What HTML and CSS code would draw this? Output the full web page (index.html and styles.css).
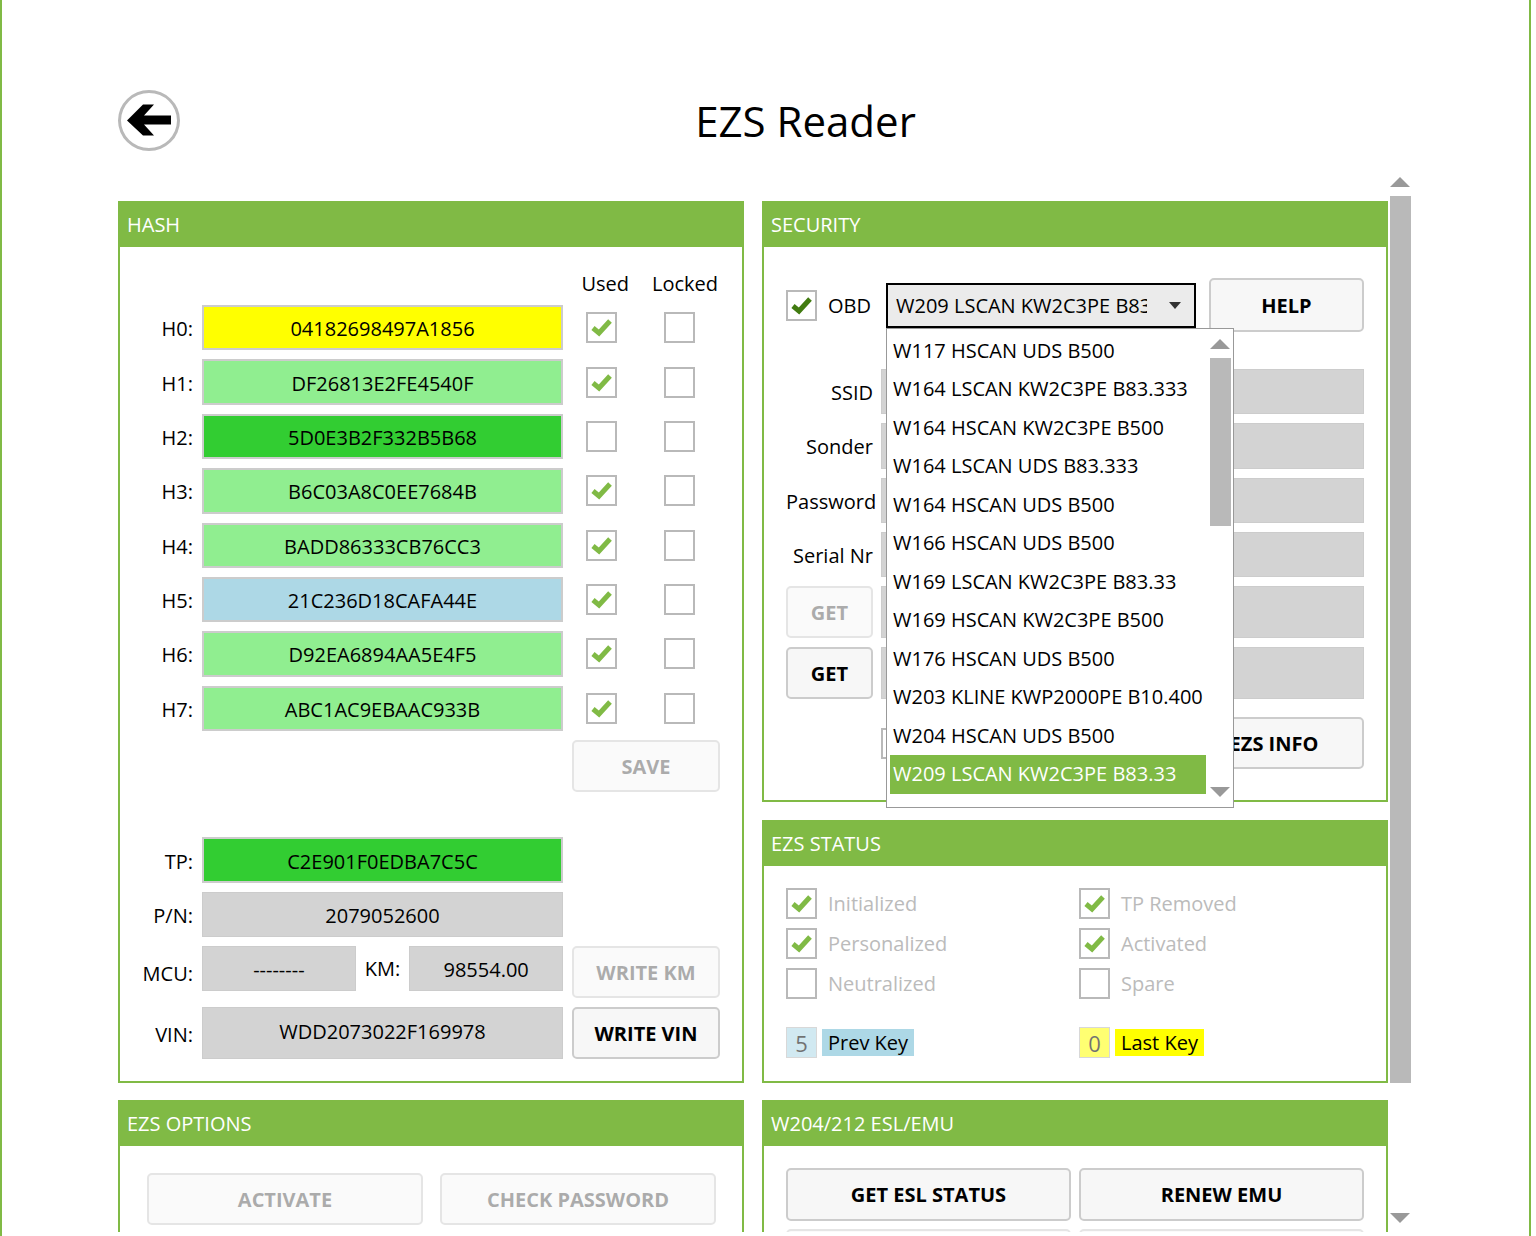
FILE: index.html
```html
<!DOCTYPE html>
<html lang="en">
    <head>
        <meta charset="utf-8">
        <title>EZS Reader</title>
        <meta name="viewport" content="width=device-width, initial-scale=1">
        <link rel="stylesheet" href="styles.css">
    </head>
    <body>
        <header class="top">
            <button class="back" type="button" aria-label="Back">
                <svg viewBox="0 0 61 61"><path d="M9 30.500 25 14.500H36L26 25.500H53V34.500H26L36 45.500H25Z"/></svg>
            </button>
            <h1>EZS Reader</h1>
        </header>
        <div class="scroller">
            <main>
                <section class="panel">
                    <h2>HASH</h2>
                    <div class="hash">
                        <div class="hash-head"><span>Used</span><span>Locked</span></div>
                        <div class="hash-rows">
                            <div class="row">
                                <label for="h0">H0:</label>
                                <input id="h0" class="field last" type="text" value="04182698497A1856">
                                <div class="flags"><input type="checkbox" aria-label="H0 used" checked><input type="checkbox" aria-label="H0 locked"></div>
                            </div>
                            <div class="row">
                                <label for="h1">H1:</label>
                                <input id="h1" class="field used" type="text" value="DF26813E2FE4540F">
                                <div class="flags"><input type="checkbox" aria-label="H1 used" checked><input type="checkbox" aria-label="H1 locked"></div>
                            </div>
                            <div class="row">
                                <label for="h2">H2:</label>
                                <input id="h2" class="field free" type="text" value="5D0E3B2F332B5B68">
                                <div class="flags"><input type="checkbox" aria-label="H2 used"><input type="checkbox" aria-label="H2 locked"></div>
                            </div>
                            <div class="row">
                                <label for="h3">H3:</label>
                                <input id="h3" class="field used" type="text" value="B6C03A8C0EE7684B">
                                <div class="flags"><input type="checkbox" aria-label="H3 used" checked><input type="checkbox" aria-label="H3 locked"></div>
                            </div>
                            <div class="row">
                                <label for="h4">H4:</label>
                                <input id="h4" class="field used" type="text" value="BADD86333CB76CC3">
                                <div class="flags"><input type="checkbox" aria-label="H4 used" checked><input type="checkbox" aria-label="H4 locked"></div>
                            </div>
                            <div class="row">
                                <label for="h5">H5:</label>
                                <input id="h5" class="field prev" type="text" value="21C236D18CAFA44E">
                                <div class="flags"><input type="checkbox" aria-label="H5 used" checked><input type="checkbox" aria-label="H5 locked"></div>
                            </div>
                            <div class="row">
                                <label for="h6">H6:</label>
                                <input id="h6" class="field used" type="text" value="D92EA6894AA5E4F5">
                                <div class="flags"><input type="checkbox" aria-label="H6 used" checked><input type="checkbox" aria-label="H6 locked"></div>
                            </div>
                            <div class="row">
                                <label for="h7">H7:</label>
                                <input id="h7" class="field used" type="text" value="ABC1AC9EBAAC933B">
                                <div class="flags"><input type="checkbox" aria-label="H7 used" checked><input type="checkbox" aria-label="H7 locked"></div>
                            </div>
                        </div>
                        <button class="btn save" type="button" disabled>SAVE</button>
                        <div class="info-rows">
                            <div class="row">
                                <label for="tp">TP:</label>
                                <input id="tp" class="field free" type="text" value="C2E901F0EDBA7C5C">
                            </div>
                            <div class="row">
                                <label for="pn">P/N:</label>
                                <input id="pn" class="field" type="text" value="2079052600">
                            </div>
                            <div class="row">
                                <label for="mcu">MCU:</label>
                                <div class="pair">
                                    <input id="mcu" class="field" type="text" value="--------">
                                    <label for="km">KM:</label>
                                    <input id="km" class="field" type="text" value="98554.00">
                                </div>
                                <button class="btn" type="button" disabled>WRITE KM</button>
                            </div>
                            <div class="row">
                                <label for="vin">VIN:</label>
                                <input id="vin" class="field tall" type="text" value="WDD2073022F169978">
                                <button class="btn" type="button">WRITE VIN</button>
                            </div>
                        </div>
                    </div>
                </section>
                <div class="column">
                    <section class="panel security">
                        <h2>SECURITY</h2>
                        <div class="security-body">
                            <div class="obd">
                                <label class="check"><input class="hot" type="checkbox" checked>OBD</label>
                                <div class="combo">
                                    <select aria-label="Vehicle protocol">
                                        <option>W209 LSCAN KW2C3PE B83.33</option>
                                    </select>
                                    <svg class="caret" viewBox="0 0 12 7"><path d="M0 0H12L6 7Z"/></svg>
                                    <div class="popup">
                                        <ul role="listbox" aria-label="Protocols">
                                            <li role="option">W117 HSCAN UDS B500</li>
                                            <li role="option">W164 LSCAN KW2C3PE B83.333</li>
                                            <li role="option">W164 HSCAN KW2C3PE B500</li>
                                            <li role="option">W164 LSCAN UDS B83.333</li>
                                            <li role="option">W164 HSCAN UDS B500</li>
                                            <li role="option">W166 HSCAN UDS B500</li>
                                            <li role="option">W169 LSCAN KW2C3PE B83.33</li>
                                            <li role="option">W169 HSCAN KW2C3PE B500</li>
                                            <li role="option">W176 HSCAN UDS B500</li>
                                            <li role="option">W203 KLINE KWP2000PE B10.400</li>
                                            <li role="option">W204 HSCAN UDS B500</li>
                                            <li role="option" class="selected" aria-selected="true">W209 LSCAN KW2C3PE B83.33</li>
                                        </ul>
                                        <div class="bar">
                                            <svg viewBox="0 0 20 10"><path d="M0 10H20L10 0Z"/></svg>
                                            <div class="track"><div class="thumb"></div></div>
                                            <svg viewBox="0 0 20 10"><path d="M0 0H20L10 10Z"/></svg>
                                        </div>
                                    </div>
                                </div>
                                <button class="btn" type="button">HELP</button>
                            </div>
                            <div class="ids">
                                <div class="id-row"><label for="ssid">SSID</label><input id="ssid" class="field" type="text"></div>
                                <div class="id-row"><label for="sonder">Sonder</label><input id="sonder" class="field" type="text"></div>
                                <div class="id-row"><label for="password">Password</label><input id="password" class="field" type="text"></div>
                                <div class="id-row"><label for="serial">Serial Nr</label><input id="serial" class="field" type="text"></div>
                            </div>
                            <div class="id-row get"><button class="btn" type="button" disabled>GET</button><input class="field tall" type="text" aria-label="First value"></div>
                            <div class="id-row get"><button class="btn" type="button">GET</button><input class="field tall" type="text" aria-label="Second value"></div>
                            <div class="read">
                                <input type="checkbox" aria-label="Read option">
                                <button class="btn" type="button">EZS INFO</button>
                            </div>
                        </div>
                    </section>
                    <section class="panel">
                        <h2>EZS STATUS</h2>
                        <div class="status">
                            <label class="check"><input type="checkbox" disabled checked>Initialized</label>
                            <label class="check"><input type="checkbox" disabled checked>TP Removed</label>
                            <label class="check"><input type="checkbox" disabled checked>Personalized</label>
                            <label class="check"><input type="checkbox" disabled checked>Activated</label>
                            <label class="check"><input type="checkbox" disabled>Neutralized</label>
                            <label class="check"><input type="checkbox" disabled>Spare</label>
                        </div>
                        <div class="keys">
                            <div class="key"><input id="prev-key" class="prev" type="text" value="5" disabled><label for="prev-key" class="prev">Prev Key</label></div>
                            <div class="key"><input id="last-key" class="last" type="text" value="0" disabled><label for="last-key" class="last">Last Key</label></div>
                        </div>
                    </section>
                </div>
                <section class="panel">
                    <h2>EZS OPTIONS</h2>
                    <div class="options">
                        <button class="btn" type="button" disabled>ACTIVATE</button>
                        <button class="btn" type="button" disabled>CHECK PASSWORD</button>
                    </div>
                </section>
                <section class="panel">
                    <h2>W204/212 ESL/EMU</h2>
                    <div class="esl">
                        <button class="btn" type="button">GET ESL STATUS</button>
                        <button class="btn" type="button">RENEW EMU</button>
                        <button class="btn" type="button" disabled></button>
                        <button class="btn" type="button" disabled></button>
                    </div>
                </section>
            </main>
            <div class="bar">
                <svg viewBox="0 0 20 10"><path d="M0 10H20L10 0Z"/></svg>
                <div class="track"><div class="thumb"></div></div>
                <svg viewBox="0 0 20 10"><path d="M0 0H20L10 10Z"/></svg>
            </div>
        </div>
    </body>
</html>
```
FILE: styles.css
```css
:root {
    --accent: #80ba45;
    --gray: #b9b9b9;
    --border: #ccc;
    --field: #d3d3d3;
    --key-last: #ff0;
    --key-prev: #add8e6;
    --key-used: #90ee90;
    --key-free: #32cd32;
    --gap: 9px;
}
* { padding: 0; margin: 0; box-sizing: border-box; }
html { background-color: white; }
body {
    display: flex; flex-flow: column;
    height: 100vh;
    margin-right: 5px;
    padding: 90px 118px 4px 116px;
    border-left: solid 2px var(--accent); border-right: solid 2px var(--accent);
    overflow: hidden;
}
body, input, button, select { font-family: "Open Sans", "Noto Sans", sans-serif; font-size: 20px; line-height: 27px; color: black; }
svg { display: block; }

/* header */
.top { display: flex; align-items: center; gap: 20px; margin-bottom: 21px; }
.top h1 { flex: auto; text-align: center; font-size: 42px; line-height: 61px; font-weight: normal; }
.back { width: 62px; height: 61px; border: solid 3px var(--gray); border-radius: 50%; background-color: white; }
.back svg { width: 61px; height: 61px; margin: -3px; }

/* scrolling area */
.scroller { flex: auto; display: flex; gap: 2px; min-height: 0; overflow: hidden; }
main {
    flex: auto;
    display: grid; grid-template-columns: 1fr 1fr; align-content: start; gap: 17px 18px;
    padding-top: 29px;
    overflow: hidden;
}
.bar { flex: none; display: flex; flex-flow: column; width: 21px; padding: 5px 0 9px; }
.bar svg { width: 20px; height: 10px; fill: #999; }
.track { flex: auto; padding: 9px 0; }
.thumb { height: 88%; background-color: var(--gray); }

/* panels */
.panel { border: solid 2px var(--accent); border-top: none; }
.panel h2 {
    height: 46px; padding: 0 7px;
    background-color: var(--accent); color: white;
    font-size: 20px; line-height: 48px; font-weight: normal;
}
.column { display: flex; flex-flow: column; gap: 18px; }
.column .panel:last-child { flex: auto; }

/* controls */
.btn {
    height: 52px;
    border: solid 2px var(--border); border-radius: 5px;
    background-color: #f7f7f7;
    font-weight: bold;
}
.btn:disabled { opacity: 0.5; color: #5a5a5a; }
.field {
    width: 100%; min-width: 0; height: 100%;
    border: solid 1px var(--border);
    background-color: var(--field);
    text-align: center;
    padding-top: 2px;
}
.last { background-color: var(--key-last); }
.prev { background-color: var(--key-prev); }
.used { background-color: var(--key-used); }
.free { background-color: var(--key-free); }
.field.last, .field.prev, .field.used, .field.free { border-width: 2px; }
input[type=checkbox] {
    appearance: none;
    flex: none;
    width: 31px; height: 31px;
    border: solid 2px var(--gray);
    background: white center / 31px 31px no-repeat;
}
input[type=checkbox]:checked { background-image: url("data:image/svg+xml,%3Csvg xmlns='http://www.w3.org/2000/svg' viewBox='0 0 31 31'%3E%3Cpath d='M7 16 13 21 24 9' fill='none' stroke='%2380ba45' stroke-width='5'/%3E%3C/svg%3E"); }
input[type=checkbox].hot:checked { background-image: url("data:image/svg+xml,%3Csvg xmlns='http://www.w3.org/2000/svg' viewBox='0 0 31 31'%3E%3Cpath d='M7 16 13 21 24 9' fill='none' stroke='%23417b10' stroke-width='5'/%3E%3C/svg%3E"); }
.check { display: flex; align-items: center; gap: 11px; }

/* hash */
.hash { padding: 22px; }
.hash-head { display: flex; justify-content: flex-end; gap: 23px; padding: 1px 2px 0 0; margin-bottom: 8px; }
.hash-rows { display: grid; grid-auto-rows: 1fr; gap: var(--gap); height: 426px; }
.row { display: grid; grid-template-columns: 51px 1fr 148px; align-items: center; column-gap: var(--gap); }
.row > label { text-align: right; white-space: nowrap; padding-top: 2px; }
.flags { display: flex; gap: 47px; padding-left: 14px; }
.save { display: block; width: 148px; margin: var(--gap) 0 45px auto; }
.info-rows { display: grid; grid-template-rows: 46px 45px 52px 52px; gap: var(--gap); }
.pair { display: flex; align-items: center; gap: var(--gap); height: 45px; align-self: start; }
.pair .field { flex: 1; }
.tall { padding-bottom: 6px; }

/* security */
.security-body { padding: 31px 22px; }
.obd { display: flex; align-items: center; margin-bottom: 37px; }
.obd .btn { flex: 1; height: 54px; }
.combo { position: relative; width: 310px; margin: 0 13px 0 15px; }
.combo select {
    appearance: none;
    display: block;
    width: 100%; height: 45px;
    padding: 0 47px 0 8px;
    border: solid 2px black; border-radius: 0;
    background-color: #ebebeb;
}
.caret { position: absolute; top: 19px; right: 15px; width: 12px; height: 7px; fill: #333; }
.popup {
    position: absolute; z-index: 1; top: 100%; left: 0;
    display: flex; gap: 4px;
    width: 348px; height: 480px;
    padding: 3px 2px 0 3px;
    border: solid 1px #999;
    background-color: white;
}
.popup ul { flex: auto; display: grid; grid-auto-rows: 1fr; height: 462px; list-style: none; }
.popup li { padding: 0 3px; line-height: 38px; white-space: nowrap; }
.popup .selected { background-color: var(--accent); color: white; }
.popup .bar { padding: 7px 0 10px; }
.popup .thumb { height: 40%; }
.ids { display: grid; grid-auto-rows: 1fr; gap: var(--gap); height: 208px; }
.id-row { display: grid; grid-template-columns: 87px 1fr; align-items: center; column-gap: 8px; }
.id-row label { text-align: right; white-space: nowrap; padding-top: 2px; }
.get { height: 52px; margin-top: var(--gap); }
.read { display: flex; justify-content: space-between; align-items: center; margin-top: 18px; padding-left: 95px; }
.read .btn { width: 180px; }

/* status */
.status, .keys { display: grid; grid-template-columns: 1fr 1fr; gap: 9px 8px; padding: 22px 22px 0; }
.status { color: #bbb; }
.keys { padding: 28px 22px 22px; }
.key { display: flex; align-items: center; gap: 5px; }
.key input { width: 31px; height: 31px; border: solid 1px var(--gray); text-align: center; font-size: 22px; opacity: 0.55; }
.key label { padding: 0 6px; }

/* bottom panels */
.options { display: grid; grid-template-columns: 1fr 1fr; gap: 17px; padding: 27px 26px 27px 27px; }
.esl { display: grid; grid-template-columns: 1fr 1fr; gap: 8px; padding: 22px; }
.esl .btn { height: 53px; }
```
